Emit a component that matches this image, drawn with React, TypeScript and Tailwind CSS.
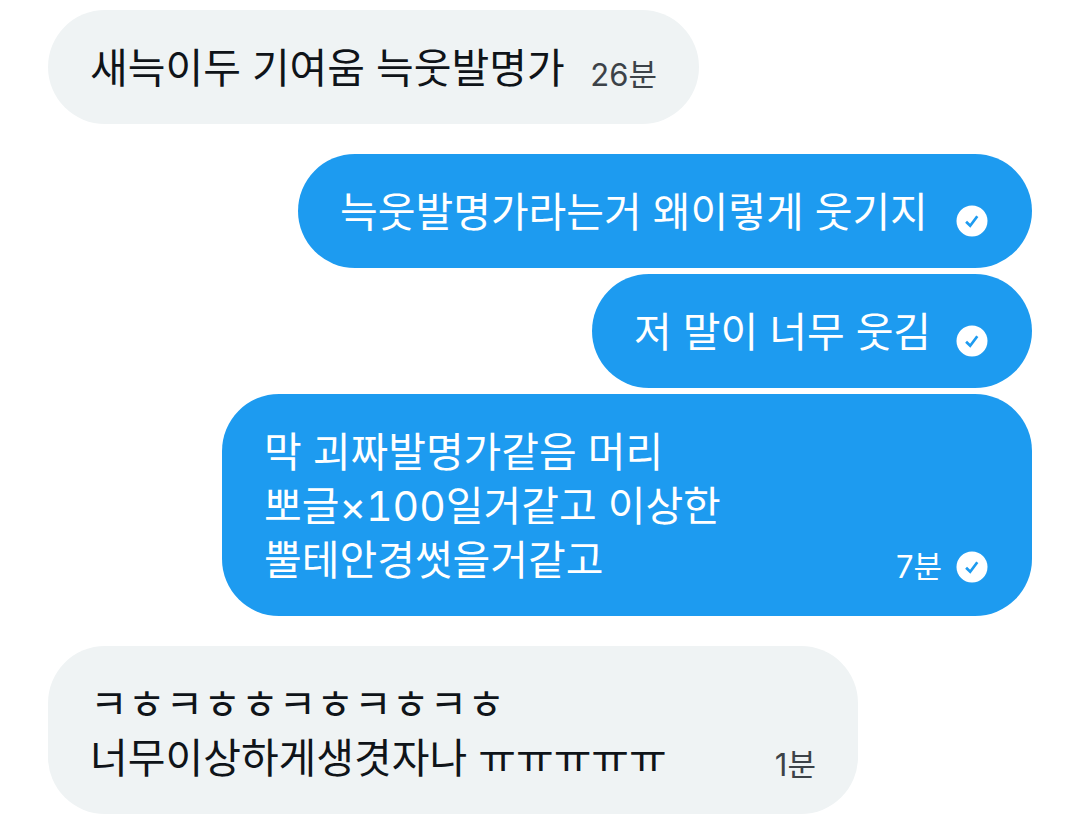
import React from 'react';
import { clsx } from 'clsx';

type Message = {
  id: number;
  mine: boolean;
  lines: string[];
  time?: string;
  width: string;
  spacing: string;
};

const messages: Message[] = [
  { id: 1, mine: false, lines: ['새늑이두 기여움 늑웃발명가'], time: '26분', width: 'w-[651px]', spacing: '' },
  { id: 2, mine: true, lines: ['늑웃발명가라는거 왜이렇게 웃기지'], width: 'w-[734px]', spacing: 'mt-[30px]' },
  { id: 3, mine: true, lines: ['저 말이 너무 웃김'], width: 'w-[440px]', spacing: 'mt-[6px]' },
  {
    id: 4,
    mine: true,
    lines: ['막 괴짜발명가같음 머리', '뽀글×100일거같고 이상한', '뿔테안경썻을거같고'],
    time: '7분',
    width: 'w-[810px]',
    spacing: 'mt-[6px]',
  },
  { id: 5, mine: false, lines: ['ㅋㅎㅋㅎㅎㅋㅎㅋㅎㅋㅎ', '너무이상하게생겻자나 ㅠㅠㅠㅠㅠ'], time: '1분', width: 'w-[810px]', spacing: 'mt-[30px]' },
];

function SentIcon() {
  return (
    <svg viewBox="0 0 32 32" className="size-8 shrink-0" role="img" aria-label="전송됨">
      <circle cx="16" cy="16" r="15.5" fill="#fff" />
      <path d="M10.1 16.7l4.1 4 7.1-9.5" fill="none" stroke="#1d9bf0" strokeWidth="2.7" />
    </svg>
  );
}

function Bubble({ message }: { message: Message }) {
  const { mine, lines, time, width, spacing } = message;

  return (
    <li
      className={clsx(
        'flex max-w-full items-end justify-between rounded-[57px] pt-[31px] pb-[29px] pl-[42px]',
        mine ? 'self-end bg-[#1d9bf0] pr-11 text-white' : 'self-start bg-[#eff3f4] pr-[42px] text-[#0f1419]',
        width,
        spacing,
      )}
    >
      <p className="text-[41px] leading-[54px] whitespace-nowrap tabular-nums">
        {lines.map((line) => (
          <span key={line} className="block">{line}</span>
        ))}
      </p>
      <div className={clsx('flex items-center gap-[14px] pb-0.5 text-[31px] leading-[36px]', !mine && 'text-[#3c4248]')}>
        {time && <time>{time}</time>}
        {mine && <SentIcon />}
      </div>
    </li>
  );
}

export default function App() {
  return (
    <main className="min-h-screen bg-white px-12 pt-2.5 font-[Inter,'Noto_Sans_CJK_KR',sans-serif]">
      <ul className="flex flex-col">
        {messages.map((message) => (
          <Bubble key={message.id} message={message} />
        ))}
      </ul>
    </main>
  );
}
